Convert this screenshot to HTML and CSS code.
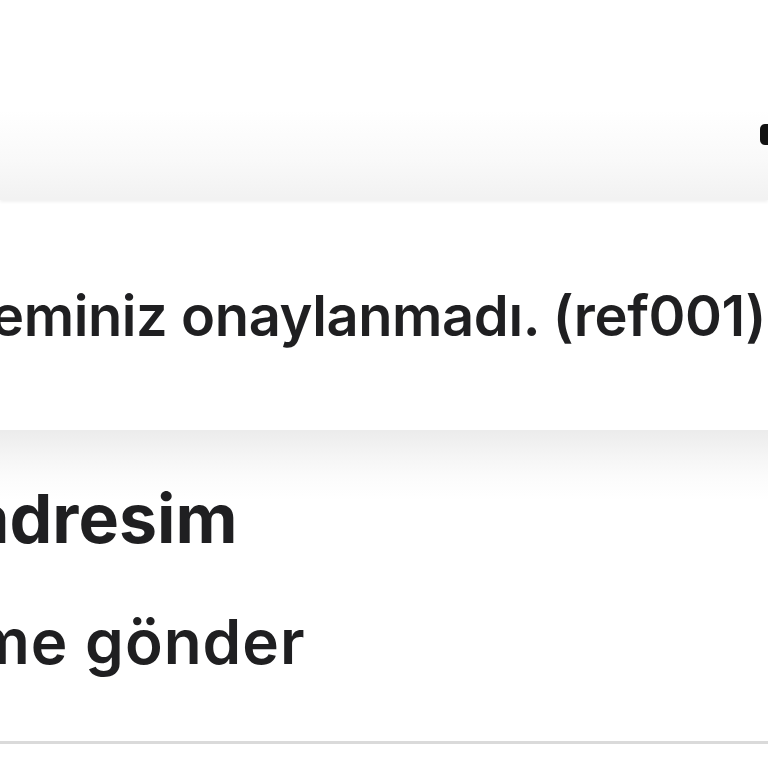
FILE: index.html
```html
<!DOCTYPE html>
<html lang="tr">
<head>
<meta charset="utf-8">
<link rel="stylesheet" href="styles.css">
</head>
<body>
<div class="screen">
  <header class="topbar">
    <span class="close-mark"></span>
  </header>
  <section class="notice">
    <p class="notice-text">eminiz onaylanmadı. (ref001)</p>
  </section>
  <section class="group">
    <div class="row row-title"><span class="title-text">adresim</span></div>
    <div class="row row-action"><span class="action-text">me gönder</span></div>
  </section>
</div>
</body>
</html>
```
FILE: styles.css
```css
html, body {
  margin: 0;
  padding: 0;
  background: #ffffff;
}
.screen {
  width: 768px;
  height: 768px;
  overflow: hidden;
  font-family: Inter, "Noto Sans", sans-serif;
  color: #1f1f21;
  display: flex;
  flex-direction: column;
}
.topbar {
  height: 200px;
  flex: none;
  background: linear-gradient(to bottom, #ffffff 0, #ffffff 110px, #f9f9f9 160px, #f2f2f2 198px);
  box-shadow: 0 2px 3px rgba(0,0,0,0.06);
  position: relative;
  z-index: 1;
  display: flex;
  justify-content: flex-end;
  align-items: flex-start;
}
.close-mark {
  width: 14px;
  height: 21px;
  margin-top: 124px;
  margin-right: -6px;
  background: #111;
  border-radius: 5px;
}
.notice {
  height: 230px;
  flex: none;
  background: #ffffff;
  display: flex;
  align-items: center;
  border-bottom: 1px solid #ececec;
}
.notice-text {
  margin: 0 0 0 -9px;
  font-size: 56px;
  font-weight: 600;
  white-space: nowrap;
  letter-spacing: -0.4px;
  padding-top: 2px;
}
.group {
  flex: none;
  height: 310px;
  background: linear-gradient(to bottom, #ececec 0, #f5f5f5 25px, #fbfbfb 45px, #ffffff 70px);
  border-bottom: 3px solid #dadada;
  display: flex;
  flex-direction: column;
}
.row {
  display: flex;
  align-items: center;
  white-space: nowrap;
}
.row-title {
  height: 150px;
}
.title-text {
  margin-left: -30px;
  font-size: 68px;
  font-weight: 700;
  padding-top: 24px;
}
.row-action {
  height: 110px;
}
.action-text {
  margin-left: -26px;
  font-size: 62px;
  font-weight: 600;
  letter-spacing: 1px;
  padding-top: 10px;
}
```
